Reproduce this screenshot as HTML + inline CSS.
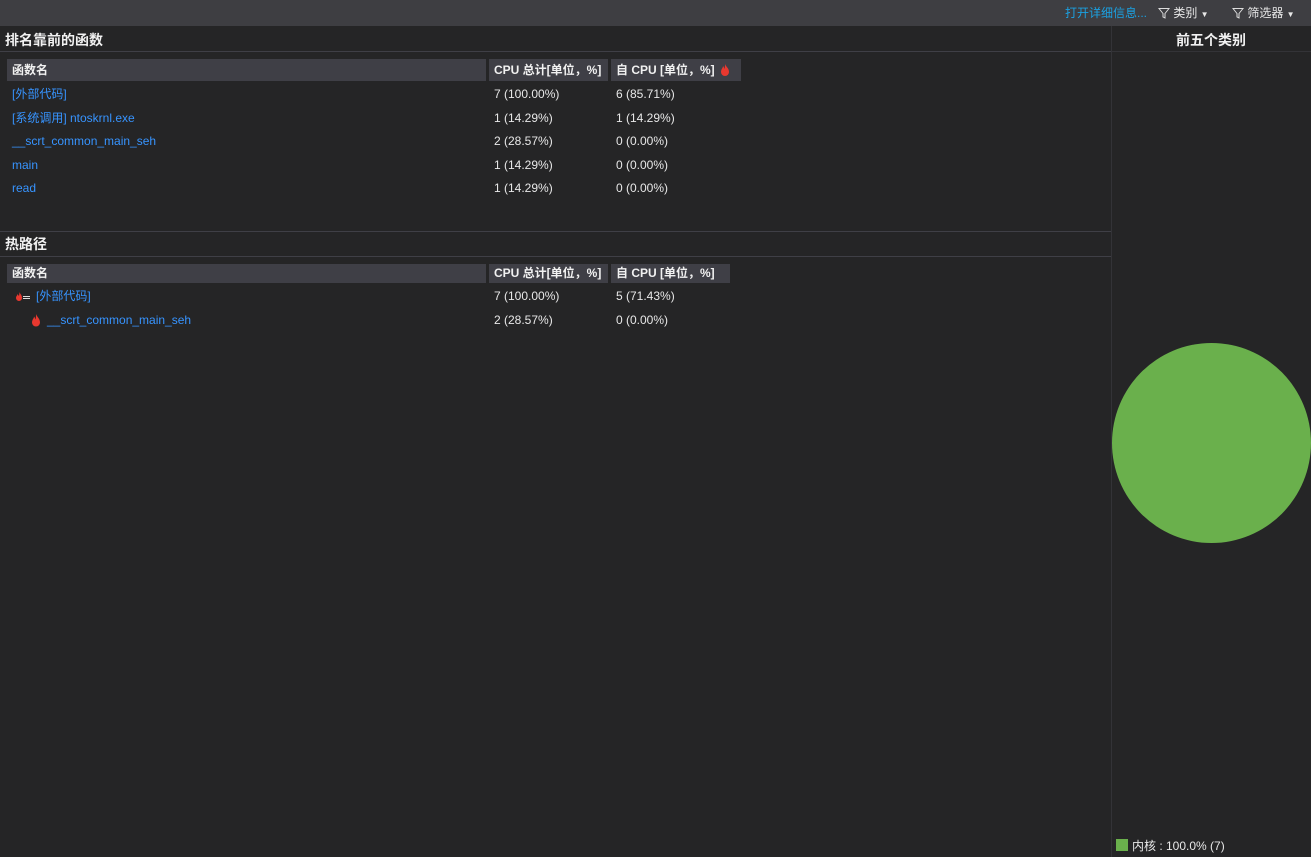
<!DOCTYPE html>
<html><head><meta charset="utf-8"><style>
*{margin:0;padding:0;box-sizing:border-box}
body{width:1311px;height:857px;background:#252526;color:#e8e8e8;font-family:"Liberation Sans","Noto Sans CJK SC",sans-serif;font-size:12px;line-height:15px;position:relative;overflow:hidden}
.abs{position:absolute;white-space:nowrap}
.top{left:0;top:0;width:1311px;height:26px;background:#3e3e42}
.lnk{color:#3794ff}
.h{background:#3f3f46;height:22px;font-weight:bold;line-height:22px;padding-left:5px;color:#f1f1f1}
.t{font-weight:bold;font-size:14px;line-height:18px;color:#f1f1f1}
.line{height:1px;background:#3f3f46}
</style></head><body>
<div class="abs top"></div>
<div class="abs" style="left:1065px;top:6px;color:#1ba1e2">打开详细信息...</div>
<div class="abs" style="left:1158px;top:6px">
<svg width="12" height="12" style="vertical-align:-2px"><path d="M1 1.5H11L7 6.5V11L5 10V6.5Z" fill="none" stroke="#ddd" stroke-width="1"/></svg> 类别 <span style="font-size:8px">▼</span></div>
<div class="abs" style="left:1232px;top:6px">
<svg width="12" height="12" style="vertical-align:-2px"><path d="M1 1.5H11L7 6.5V11L5 10V6.5Z" fill="none" stroke="#ddd" stroke-width="1"/></svg> 筛选器 <span style="font-size:8px">▼</span></div>
<div class="abs" style="left:1111px;top:26px;width:1px;height:831px;background:#333337"></div>
<div class="abs t" style="left:1176px;top:31px">前五个类别</div>
<div class="abs line" style="left:1112px;top:51px;width:199px;background:#333337"></div>

<div class="abs t" style="left:5px;top:31px">排名靠前的函数</div>
<div class="abs line" style="left:0;top:51px;width:1111px"></div>
<div class="abs h" style="left:7px;top:59px;width:479px">函数名</div>
<div class="abs h" style="left:489px;top:59px;width:119px">CPU 总计[单位，%]</div>
<div class="abs h" style="left:611px;top:59px;width:130px">自 CPU [单位，%] <svg width="10" height="12" style="vertical-align:-2px;margin-left:2px"><path d="M5 0C6 3 9 4 9 8A4 4 0 0 1 1 8C1 5 3 4 3 2C4 3 4 4 4.5 5C5 3 5 2 5 0Z" fill="#e8382f"/></svg></div>
<div class="abs lnk" style="left:12px;top:87px">[外部代码]</div>
<div class="abs lnk" style="left:12px;top:111px">[系统调用] ntoskrnl.exe</div>
<div class="abs lnk" style="left:12px;top:134px">__scrt_common_main_seh</div>
<div class="abs lnk" style="left:12px;top:158px">main</div>
<div class="abs lnk" style="left:12px;top:181px">read</div>
<div class="abs" style="left:494px;top:87px">7 (100.00%)</div>
<div class="abs" style="left:494px;top:111px">1 (14.29%)</div>
<div class="abs" style="left:494px;top:134px">2 (28.57%)</div>
<div class="abs" style="left:494px;top:158px">1 (14.29%)</div>
<div class="abs" style="left:494px;top:181px">1 (14.29%)</div>
<div class="abs" style="left:616px;top:87px">6 (85.71%)</div>
<div class="abs" style="left:616px;top:111px">1 (14.29%)</div>
<div class="abs" style="left:616px;top:134px">0 (0.00%)</div>
<div class="abs" style="left:616px;top:158px">0 (0.00%)</div>
<div class="abs" style="left:616px;top:181px">0 (0.00%)</div>

<div class="abs line" style="left:0;top:231px;width:1111px"></div>
<div class="abs t" style="left:5px;top:235px">热路径</div>
<div class="abs line" style="left:0;top:256px;width:1111px"></div>
<div class="abs h" style="left:7px;top:264px;width:479px;height:19px;line-height:19px">函数名</div>
<div class="abs h" style="left:489px;top:264px;width:119px;height:19px;line-height:19px">CPU 总计[单位，%]</div>
<div class="abs h" style="left:611px;top:264px;width:119px;height:19px;line-height:19px">自 CPU [单位，%]</div>
<svg class="abs" style="left:16px;top:292px" width="16" height="10"><path d="M3.5 0C4 2 6 3 6 6A3 3 0 0 1 0 6C0 4 1.5 3.5 1.5 2C2.3 3 2.5 3.5 3 4C3.2 2.5 3.5 1.5 3.5 0Z" fill="#e8382f"/><rect x="7" y="4" width="7" height="1" fill="#ddd"/><rect x="7" y="6" width="7" height="1" fill="#ddd"/></svg>
<div class="abs lnk" style="left:36px;top:289px">[外部代码]</div>
<svg class="abs" style="left:31px;top:314px" width="10" height="13"><path d="M5 0C6 3 9 4.5 9 8.5A4 4 0 0 1 1 8.5C1 5.5 3 4.5 3 2.5C4 3.5 4 4.5 4.5 5.5C5 3.5 5 2 5 0Z" fill="#e8382f"/></svg>
<div class="abs lnk" style="left:47px;top:313px">__scrt_common_main_seh</div>
<div class="abs" style="left:494px;top:289px">7 (100.00%)</div>
<div class="abs" style="left:494px;top:313px">2 (28.57%)</div>
<div class="abs" style="left:616px;top:289px">5 (71.43%)</div>
<div class="abs" style="left:616px;top:313px">0 (0.00%)</div>

<div class="abs" style="left:1112px;top:343px;width:199px;height:200px;border-radius:50%;background:#6ab04c"></div>
<div class="abs" style="left:1116px;top:839px;width:12px;height:12px;background:#6ab04c"></div>
<div class="abs" style="left:1132px;top:839px">内核 : 100.0% (7)</div>
</body></html>
